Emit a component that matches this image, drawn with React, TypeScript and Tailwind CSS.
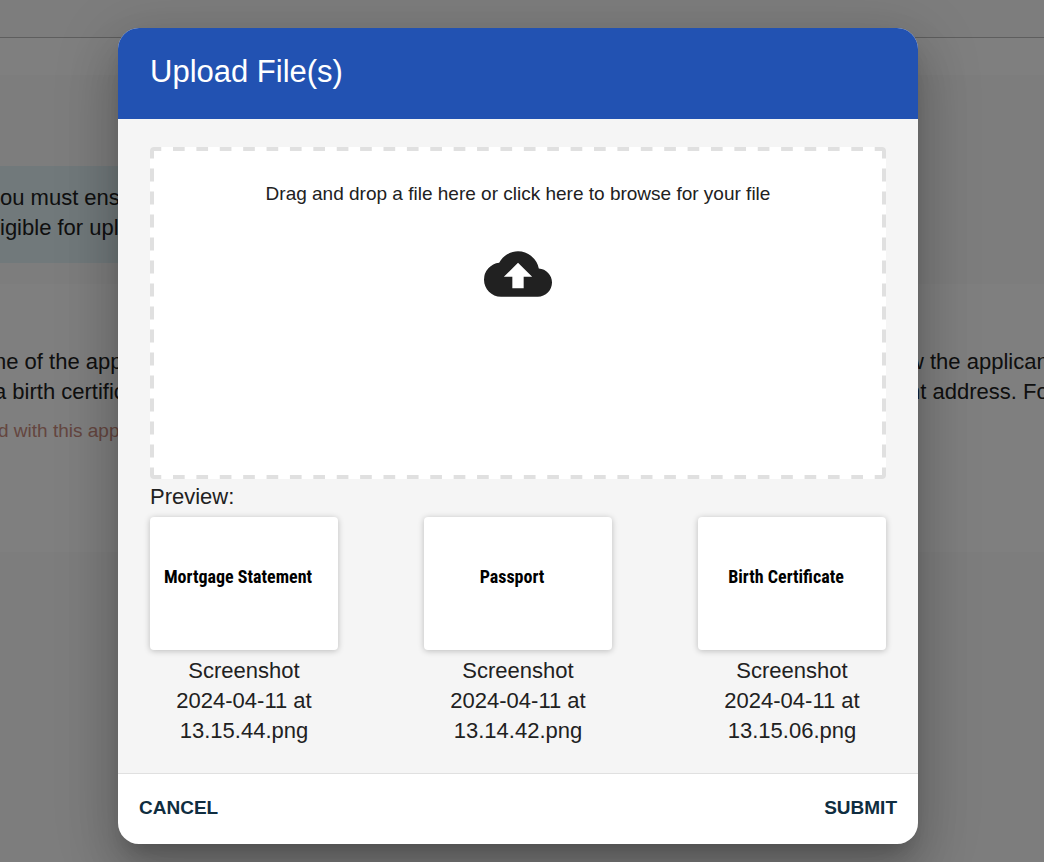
import { useState } from 'react';
import { MdCloudUpload } from 'react-icons/md';

interface UploadedFile {
  name: string;
  title: string;
}

const FILES: UploadedFile[] = [
  { name: 'Screenshot 2024-04-11 at 13.15.44.png', title: 'Mortgage Statement' },
  { name: 'Screenshot 2024-04-11 at 13.14.42.png', title: 'Passport' },
  { name: 'Screenshot 2024-04-11 at 13.15.06.png', title: 'Birth Certificate' },
];

function ApplicationPage() {
  return (
    <div aria-hidden="true" className="min-h-screen overflow-hidden bg-[#fbfbfb] text-[22px] leading-[30px] whitespace-nowrap">
      <header className="h-[38px] border-b border-[#bdbdbd] bg-[#fbfbfb]" />
      <div className="h-[37px] bg-white" />
      <section className="h-[209px] pt-[91px]">
        <div className="w-3/4 bg-[#e3f2f7] pt-[17px] pb-5">
          <p>ou must ens</p>
          <p>igible for upl</p>
        </div>
      </section>
      <section className="h-[268px] bg-white pt-[63px]">
        <div className="flex justify-between">
          <div className="-ml-1.5">
            <p>ne of the app</p>
            <p>a birth certific</p>
          </div>
          <div className="w-[136px] overflow-hidden">
            <p>w the applican</p>
            <p>nt address. Fo</p>
          </div>
        </div>
        <p className="-ml-0.5 pt-[9px] text-[19px] text-[#c98c80]">d with this app</p>
      </section>
    </div>
  );
}

function DropZone() {
  return (
    <label className="relative flex h-[332px] cursor-pointer flex-col items-center rounded-[4px] bg-white pt-8 text-[19px] leading-[30px]">
      <input type="file" multiple className="sr-only" />
      {/* dashed edges, top/bottom then left/right */}
      <span className="absolute inset-0 rounded-[4px] [background-image:linear-gradient(90deg,#e0e0e0_27%,transparent_27%_73%,#e0e0e0_73%),linear-gradient(90deg,#e0e0e0_27%,transparent_27%_73%,#e0e0e0_73%),linear-gradient(transparent_23%,#e0e0e0_23%_77%,transparent_77%),linear-gradient(transparent_23%,#e0e0e0_23%_77%,transparent_77%)] [background-position:50%_0,50%_100%,0_50%,100%_50%] [background-repeat:repeat-x,repeat-x,repeat-y,repeat-y] [background-size:3.18%_4px,3.18%_4px,4px_23px,4px_23px]" />
      <span>Drag and drop a file here or click here to browse for your file</span>
      <MdCloudUpload className="mt-[31px] size-[68px] text-[#212121]" />
    </label>
  );
}

function FilePreview({ file }: { file: UploadedFile }) {
  return (
    <figure className="w-[188px]">
      <div className="flex h-[133px] items-center justify-center rounded-[4px] bg-white pr-3 pb-3.5 shadow-[0_1px_6px_rgba(0,0,0,0.24)]">
        <span className="font-['Roboto_Condensed','Liberation_Sans_Narrow',Roboto,sans-serif] text-[18px] font-bold whitespace-nowrap text-black">
          {file.title}
        </span>
      </div>
      <figcaption className="mt-1.5 px-5 text-center">{file.name}</figcaption>
    </figure>
  );
}

export default function App() {
  const [open, setOpen] = useState(true);

  return (
    <div className="relative font-['Liberation_Sans',Arial,sans-serif] text-[#212121]">
      <ApplicationPage />
      {open && (
        <div className="absolute inset-0 flex items-start justify-center overflow-hidden bg-black/50 pt-7 pr-2">
          <div
            role="dialog"
            aria-modal="true"
            aria-labelledby="upload-title"
            className="w-full max-w-[800px] overflow-hidden rounded-[21px] bg-white shadow-[0_15px_20px_-9px_rgba(0,0,0,0.2),0_32px_50px_4px_rgba(0,0,0,0.14),0_12px_60px_11px_rgba(0,0,0,0.12)]"
          >
            <h2 id="upload-title" className="bg-[#2252b2] px-8 pt-6 pb-[27px] text-[31px] leading-10 text-white">
              Upload File(s)
            </h2>
            <div className="border-b border-[#e0e0e0] bg-[#f5f5f5] px-8 pt-7 pb-[27px] text-[22px] leading-[30px]">
              <DropZone />
              <p className="pt-[3px] pb-[5px]">Preview:</p>
              <div className="flex justify-between">
                {FILES.map(f => (
                  <FilePreview key={f.name} file={f} />
                ))}
              </div>
            </div>
            <div className="flex justify-between px-[21px] pt-[19px] pb-[21px] text-[19px] leading-[30px] font-bold text-[#0f2d40]">
              <button type="button" onClick={() => setOpen(false)}>CANCEL</button>
              <button type="button">SUBMIT</button>
            </div>
          </div>
        </div>
      )}
    </div>
  );
}
